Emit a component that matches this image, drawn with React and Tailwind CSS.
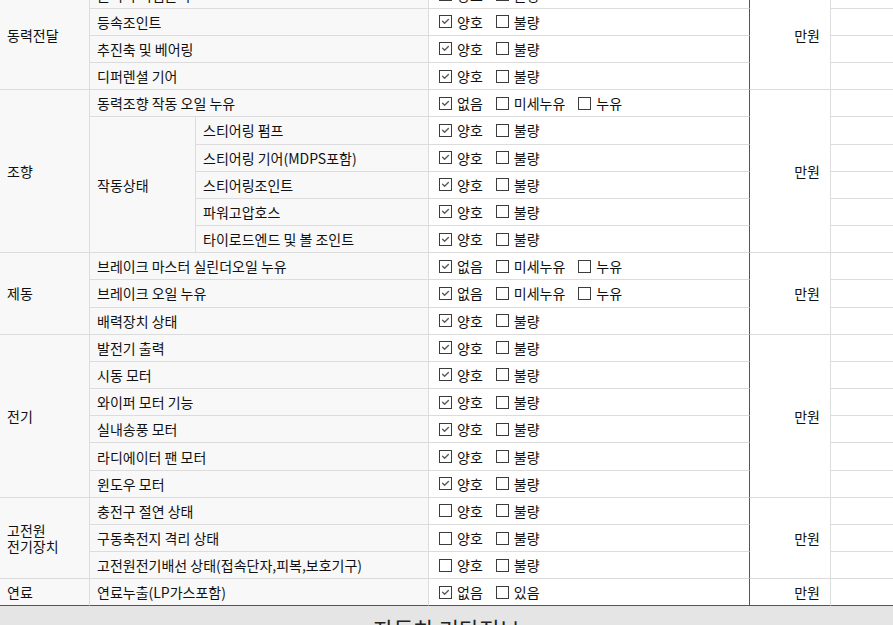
import React from "react";

const YH = (c = true) => [
  { label: "양호", checked: c },
  { label: "불량", checked: false },
];
const LEAK = [
  { label: "없음", checked: true },
  { label: "미세누유", checked: false },
  { label: "누유", checked: false },
];

const groups = [
  {
    cat: ["동력전달"],
    rows: [
      { name: "클러치 어셈블리", opts: YH() },
      { name: "등속조인트", opts: YH() },
      { name: "추진축 및 베어링", opts: YH() },
      { name: "디퍼렌셜 기어", opts: YH() },
    ],
  },
  {
    cat: ["조향"],
    rows: [
      { name: "동력조향 작동 오일 누유", opts: LEAK },
      { sub: "작동상태", subSpan: 5, name: "스티어링 펌프", opts: YH() },
      { inSub: true, name: "스티어링 기어(MDPS포함)", opts: YH() },
      { inSub: true, name: "스티어링조인트", opts: YH() },
      { inSub: true, name: "파워고압호스", opts: YH() },
      { inSub: true, name: "타이로드엔드 및 볼 조인트", opts: YH() },
    ],
  },
  {
    cat: ["제동"],
    rows: [
      { name: "브레이크 마스터 실린더오일 누유", opts: LEAK },
      { name: "브레이크 오일 누유", opts: LEAK },
      { name: "배력장치 상태", opts: YH() },
    ],
  },
  {
    cat: ["전기"],
    rows: [
      { name: "발전기 출력", opts: YH() },
      { name: "시동 모터", opts: YH() },
      { name: "와이퍼 모터 기능", opts: YH() },
      { name: "실내송풍 모터", opts: YH() },
      { name: "라디에이터 팬 모터", opts: YH() },
      { name: "윈도우 모터", opts: YH() },
    ],
  },
  {
    cat: ["고전원", "전기장치"],
    rows: [
      { name: "충전구 절연 상태", opts: YH(false) },
      { name: "구동축전지 격리 상태", opts: YH(false) },
      { name: "고전원전기배선 상태(접속단자,피복,보호기구)", opts: YH(false) },
    ],
  },
  {
    cat: ["연료"],
    rows: [
      {
        name: "연료누출(LP가스포함)",
        opts: [
          { label: "없음", checked: true },
          { label: "있음", checked: false },
        ],
      },
    ],
  },
];

const SPAN = {
  1: "row-span-1",
  3: "row-span-3",
  4: "row-span-4",
  5: "row-span-5",
  6: "row-span-6",
};

function Box({ checked }) {
  return (
    <span className="w-[13px] h-[13px] border border-[#3c3c3c] bg-white flex items-center justify-center shrink-0">
      {checked && (
        <svg width="11" height="11" viewBox="0 0 11 11">
          <path
            d="M2.6 5.2 L4.6 7.2 L8.4 3.6"
            stroke="#5a5a5a"
            strokeWidth="1.4"
            fill="none"
            strokeLinecap="round"
            strokeLinejoin="round"
          />
        </svg>
      )}
    </span>
  );
}

export default function App() {
  const cells = [];
  groups.forEach((g, gi) => {
    const lastGroup = gi === groups.length - 1;
    const bb = lastGroup ? "border-b-[#555]" : "";
    g.rows.forEach((r, ri) => {
      const lastRow = lastGroup && ri === g.rows.length - 1;
      const rb = lastRow ? "border-b-[#555]" : "";
      if (ri === 0) {
        cells.push(
          <div
            key={`c${gi}`}
            className={`${SPAN[g.rows.length]} bg-[#f8f8f8] border-r border-b border-[#dcdcdc] ${bb} flex flex-col justify-center pl-[7px] leading-[16px]`}
          >
            {g.cat.map((c) => (
              <span key={c}>{c}</span>
            ))}
          </div>
        );
      }
      if (r.sub) {
        cells.push(
          <div
            key={`s${gi}${ri}`}
            className={`${SPAN[r.subSpan]} bg-[#f8f8f8] border-r border-b border-[#dcdcdc] flex items-center pl-[7px]`}
          >
            {r.sub}
          </div>
        );
      }
      const nameSpan = r.sub || r.inSub ? "col-span-1" : "col-span-2";
      cells.push(
        <div
          key={`n${gi}${ri}`}
          className={`${nameSpan} bg-[#f8f8f8] border-r border-b border-[#dcdcdc] ${rb} flex items-center pl-[7px] whitespace-nowrap overflow-hidden`}
        >
          {r.name}
        </div>
      );
      cells.push(
        <div
          key={`o${gi}${ri}`}
          className={`bg-white border-r border-b border-[#dcdcdc] border-r-[#555] ${rb} flex items-center pl-[10px]`}
        >
          {r.opts.map((o) => (
            <span key={o.label} className="flex items-center gap-[5px] mr-[13px]">
              <Box checked={o.checked} />
              <span>{o.label}</span>
            </span>
          ))}
        </div>
      );
      if (ri === 0) {
        cells.push(
          <div
            key={`m${gi}`}
            className={`${SPAN[g.rows.length]} bg-white border-r border-b border-[#dcdcdc] ${bb} flex items-center justify-end pr-[10px]`}
          >
            만원
          </div>
        );
      }
      cells.push(
        <div
          key={`e${gi}${ri}`}
          className={`bg-white border-b border-[#dcdcdc] ${rb}`}
        />
      );
    });
  });

  return (
    <div
      className="w-[893px] h-[625px] overflow-hidden bg-white text-[14px] leading-[20px] text-[#111]"
      style={{ fontFamily: '"Noto Sans CJK KR", "Noto Sans", sans-serif' }}
    >
      <div className="grid grid-cols-[90px_106px_233px_321px_81px_1fr] auto-rows-[27.18px] mt-[-18.5px]">
        {cells}
      </div>
      <div className="bg-[#e4e5e4] h-[48px] flex justify-center pt-[7px]">
        <span className="text-[22px] text-[#222] leading-[30px]">자동차 기타정보</span>
      </div>
    </div>
  );
}
